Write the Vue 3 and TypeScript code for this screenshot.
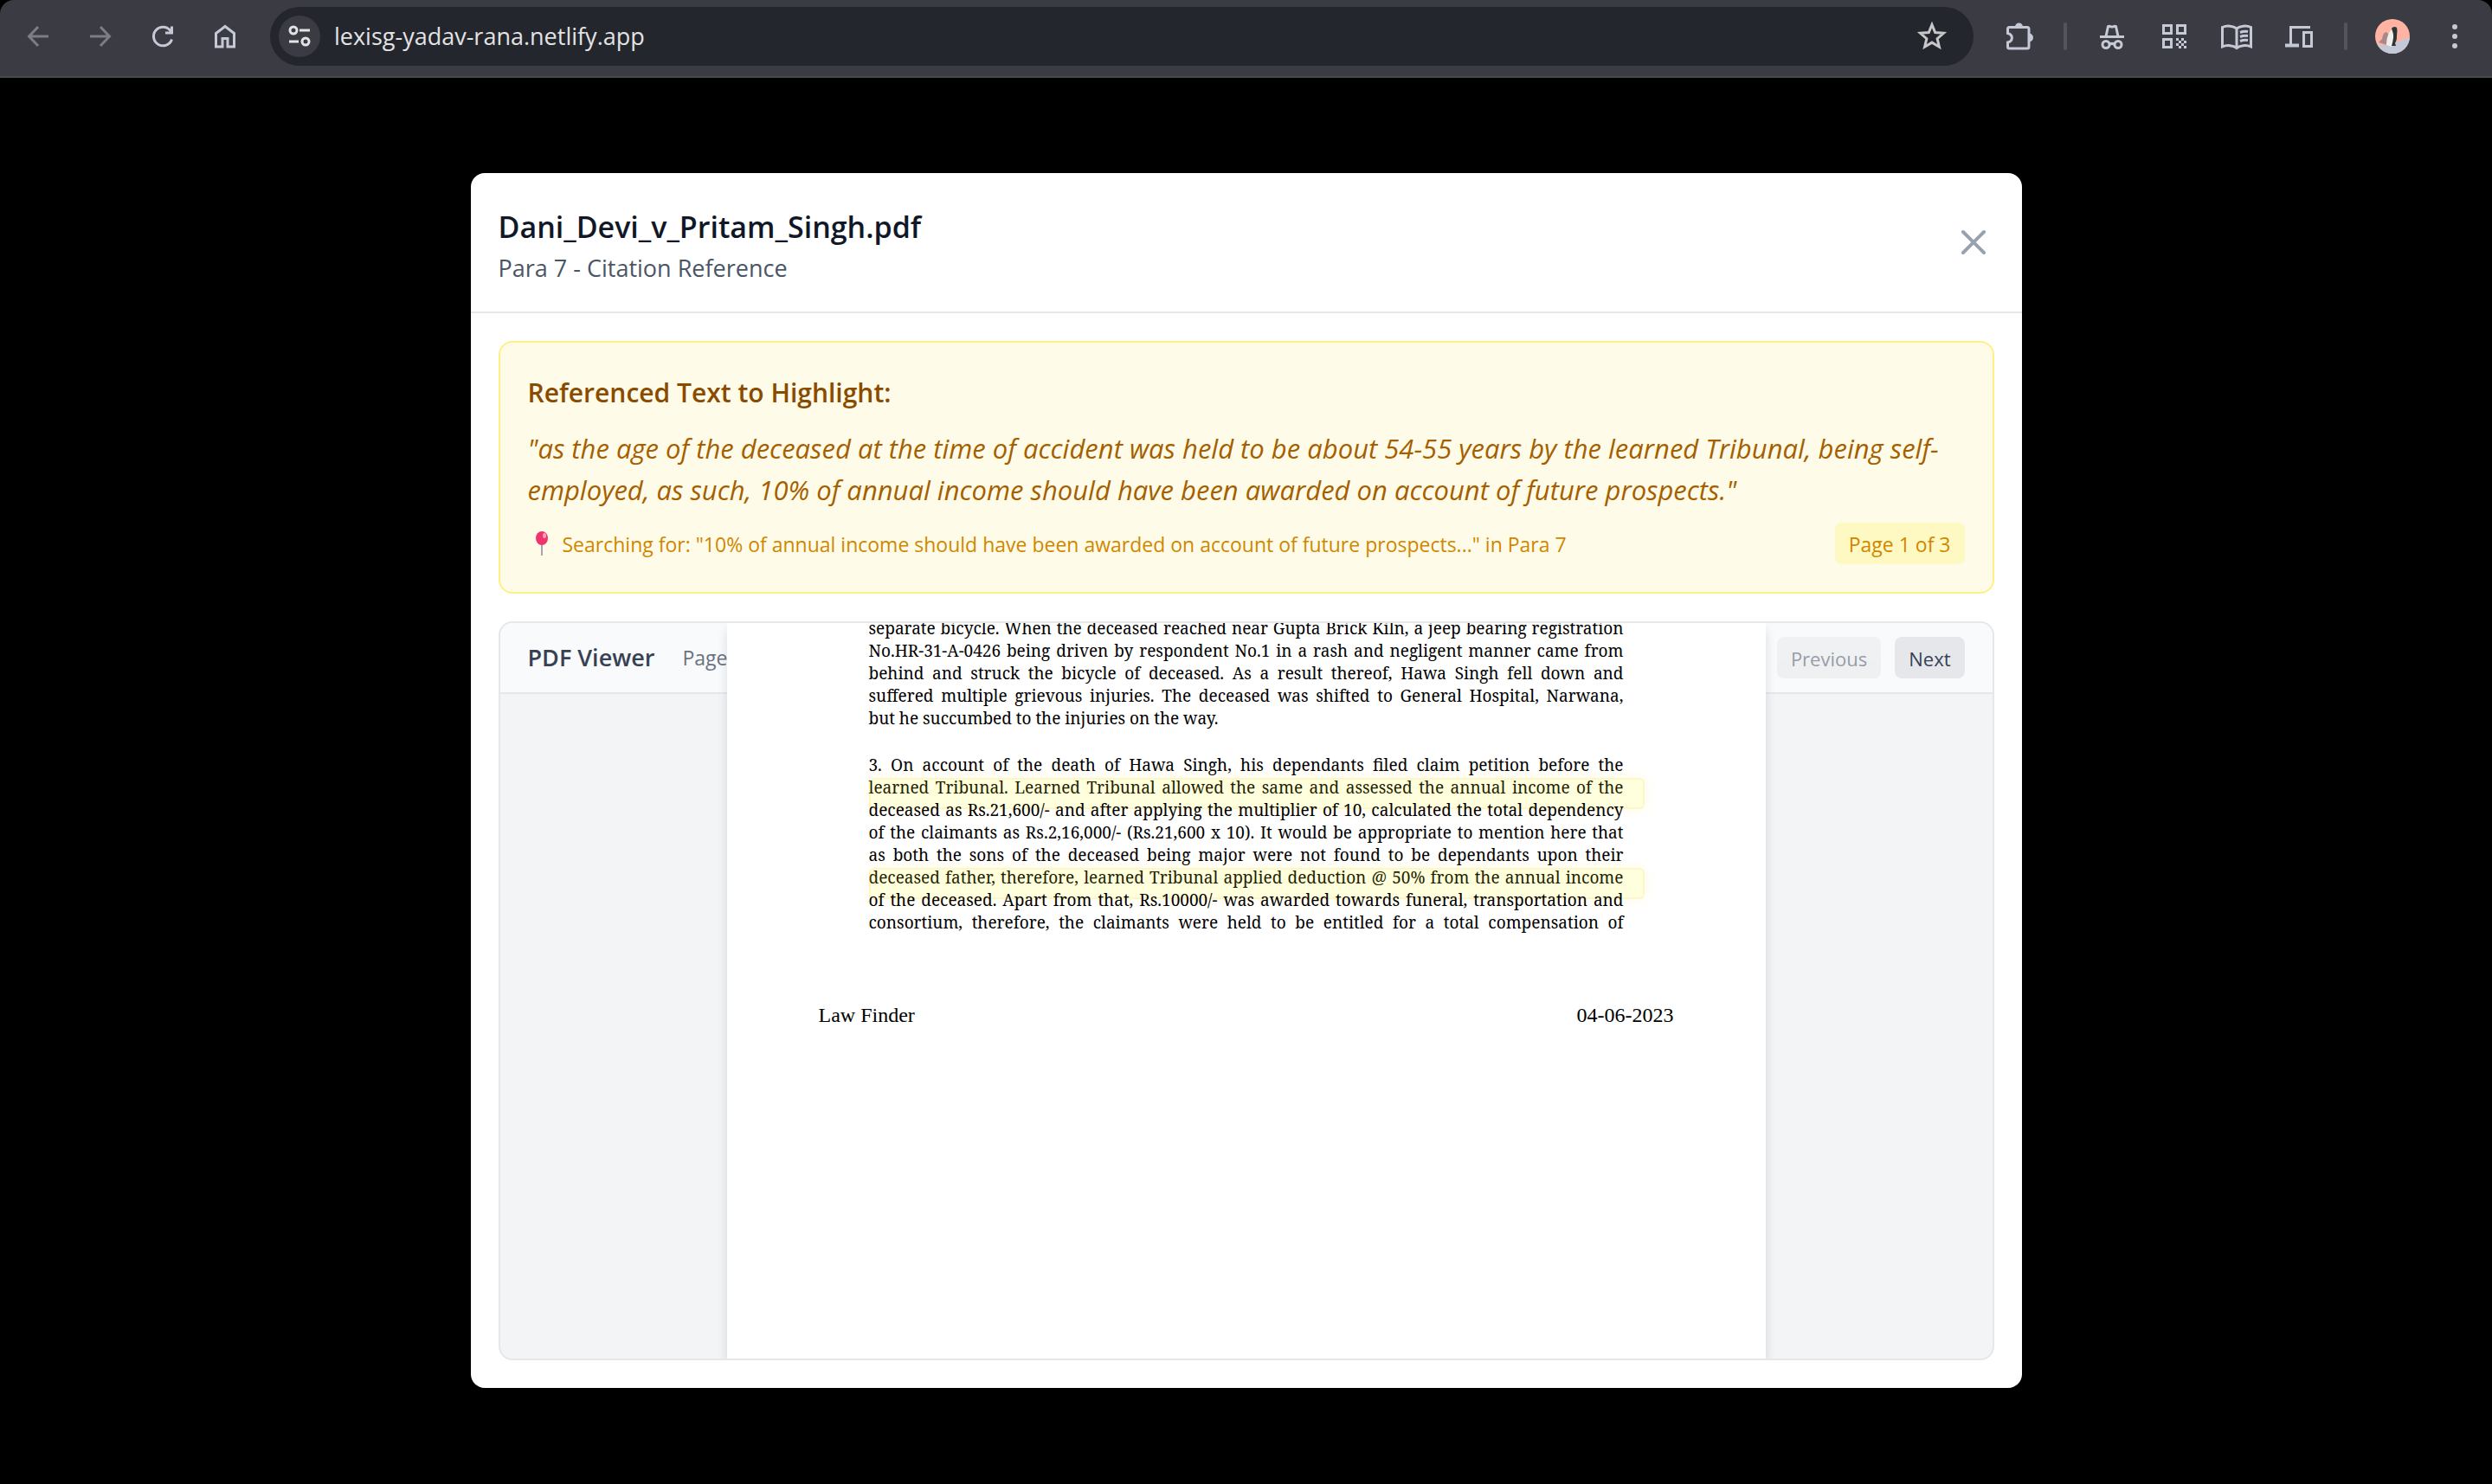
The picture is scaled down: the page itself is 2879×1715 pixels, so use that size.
<script setup lang="ts">
import { ref } from 'vue'

interface Line {
  text: string
  marked?: boolean
  last?: boolean
}

const address = ref('lexisg-yadav-rana.netlify.app')
const fileName = 'Dani_Devi_v_Pritam_Singh.pdf'
const page = ref(1)
const pageCount = 3

const paragraphs: Line[][] = [
  [
    { text: 'separate bicycle. When the deceased reached near Gupta Brick Kiln, a jeep bearing registration' },
    { text: 'No.HR-31-A-0426 being driven by respondent No.1 in a rash and negligent manner came from' },
    { text: 'behind and struck the bicycle of deceased. As a result thereof, Hawa Singh fell down and' },
    { text: 'suffered multiple grievous injuries. The deceased was shifted to General Hospital, Narwana,' },
    { text: 'but he succumbed to the injuries on the way.', last: true },
  ],
  [
    { text: '3. On account of the death of Hawa Singh, his dependants filed claim petition before the' },
    { text: 'learned Tribunal. Learned Tribunal allowed the same and assessed the annual income of the', marked: true },
    { text: 'deceased as Rs.21,600/- and after applying the multiplier of 10, calculated the total dependency' },
    { text: 'of the claimants as Rs.2,16,000/- (Rs.21,600 x 10). It would be appropriate to mention here that' },
    { text: 'as both the sons of the deceased being major were not found to be dependants upon their' },
    { text: 'deceased father, therefore, learned Tribunal applied deduction @ 50% from the annual income', marked: true },
    { text: 'of the deceased. Apart from that, Rs.10000/- was awarded towards funeral, transportation and' },
    { text: 'consortium, therefore, the claimants were held to be entitled for a total compensation of' },
  ],
]
</script>

<template>
  <div class="window">
    <header class="browser">
      <nav class="tools" aria-label="Navigation">
        <button class="tool dim" aria-label="Back">
          <svg width="32" height="32" viewBox="0 0 32 32"><path d="M28 16H6M16 5L5.500 16 16 27" /></svg>
        </button>
        <button class="tool dim" aria-label="Forward">
          <svg width="32" height="32" viewBox="0 0 32 32"><path d="M4 16h22M16 5l10.500 11L16 27" /></svg>
        </button>
        <button class="tool" aria-label="Reload">
          <svg width="32" height="32" viewBox="0 0 32 32"><path d="M26.500 19.500A10.800 10.800 0 1 1 24.500 9L27 12M26.500 4.500V12H19" /></svg>
        </button>
        <button class="tool" aria-label="Home">
          <svg width="32" height="32" viewBox="0 0 32 32"><path d="M5.500 28V12.500L16 4.500l10.500 8V28h-7.500v-9.500h-6V28z" /></svg>
        </button>
      </nav>
      <div class="address">
        <button class="site" aria-label="View site information">
          <svg width="28" height="28" viewBox="0 0 28 28"><circle cx="7" cy="7" r="4" /><path d="M14 7h12M2 20h11" /><circle cx="21" cy="20" r="4" /></svg>
        </button>
        <input v-model="address" type="text" aria-label="Address" />
        <button class="tool" aria-label="Bookmark">
          <svg class="star" width="36" height="36" viewBox="0 0 36 36"><path d="M18 4.500l3.700 9 9.800.8-7.400 6.400 2.300 9.500L18 25.100l-8.400 5.100 2.300-9.500-7.400-6.400 9.800-.8z" /></svg>
        </button>
      </div>
      <div class="tools">
        <button class="tool" aria-label="Extensions">
          <svg width="36" height="36" viewBox="0 0 36 36"><path d="M5.500 9.500a2 2 0 0 1 2-2H28a2 2 0 0 1 2 2V30a2 2 0 0 1-2 2H7.500a2 2 0 0 1-2-2v-5c6.500-1.500 6.500-9 0-10.500z" /><path class="fill" d="M14 7a4.500 4.500 0 0 1 9 0zM30 14.500a5 5 0 0 1 0 10z" /></svg>
        </button>
        <span class="divider"></span>
        <button class="tool" aria-label="Incognito">
          <svg width="32" height="32" viewBox="0 0 32 32"><path d="M2 16.500h28M9 16L11.500 4.500c2-1 2.500.5 4.500.5s2.500-1.500 4.500-.5L23 16M13 25.500c2-1.500 4-1.500 6 0" /><circle cx="9" cy="25.500" r="4" /><circle cx="23" cy="25.500" r="4" /></svg>
        </button>
        <button class="tool" aria-label="QR code">
          <svg width="32" height="32" viewBox="0 0 32 32"><path d="M3.500 3.500h9v9h-9zM19.500 3.500h9v9h-9zM3.500 19.500h9v9h-9z" /><path class="fill" d="M18 18h3v3h-3zM24 18h3v3h-3zM21 21h3v3h-3zM27 21h3v3h-3zM18 24h3v3h-3zM24 24h3v3h-3zM21 27h3v3h-3zM27 27h3v3h-3z" /></svg>
        </button>
        <button class="tool" aria-label="Reading mode">
          <svg width="40" height="32" viewBox="0 0 40 32"><path d="M20 7C16 4 9 3 3.500 5.500V28C9 25.500 16 26.500 20 29.500 24 26.500 31 25.500 36.500 28V5.500C31 3 24 4 20 7v22.500M24 11.500c3-1.200 6-1.500 9-1M24 16.500c3-1.200 6-1.500 9-1M24 21.500c3-1.200 6-1.500 9-1" /></svg>
        </button>
        <button class="tool" aria-label="Send to your devices">
          <svg width="36" height="32" viewBox="0 0 36 32"><path d="M31 5.500H8.500V26" /><path d="M2 26.500h16" stroke-width="4" /><path d="M23.500 11.500h9v16h-9z" /></svg>
        </button>
        <span class="divider"></span>
        <button class="tool" aria-label="Profile">
          <svg class="avatar" width="40" height="40" viewBox="0 0 40 40">
            <defs><clipPath id="face"><circle cx="20" cy="20" r="20" /></clipPath></defs>
            <g clip-path="url(#face)">
              <path fill="#ffb3a3" d="M0 0h40v40H0z" />
              <path fill="#c3c9d8" d="M0 29l14 2 26-10v19H0z" />
              <path fill="#a98a8c" d="M4 27l4-4c1-4 1-7 5-8l3 3-2 12z" />
              <path fill="#eef0ee" d="M13 30c0-7 2-14 6-18l3 4-3 16z" />
              <path fill="#2e3535" d="M19 11c1-2 4-3 6-1 1 3 0 7 0 11 0 3-1 5-2 7l1 3h-5c2-6 3-12 1-17z" />
            </g>
          </svg>
        </button>
        <button class="tool" aria-label="Menu">
          <svg width="8" height="32" viewBox="0 0 8 32"><g class="fill"><circle cx="4" cy="5" r="3" /><circle cx="4" cy="16" r="3" /><circle cx="4" cy="27" r="3" /></g></svg>
        </button>
      </div>
    </header>

    <main class="stage">
      <section class="modal" role="dialog" aria-labelledby="file-title">
        <header class="modal-head">
          <div>
            <h1 id="file-title">{{ fileName }}</h1>
            <p>Para 7 - Citation Reference</p>
          </div>
          <button class="close" aria-label="Close">
            <svg width="48" height="48" viewBox="0 0 24 24"><path d="M6 18L18 6M6 6l12 12" /></svg>
          </button>
        </header>

        <div class="modal-body">
          <section class="reference">
            <h2>Referenced Text to Highlight:</h2>
            <blockquote>"as the age of the deceased at the time of accident was held to be about 54-55 years by the learned Tribunal, being self-employed, as such, 10% of annual income should have been awarded on account of future prospects."</blockquote>
            <div class="search">
              <svg class="pin" width="32" height="32" viewBox="0 0 32 32">
                <path stroke="#a9a4b4" stroke-width="2" d="M16 16v14" />
                <ellipse cx="16" cy="10" rx="7" ry="8" fill="#f0346e" />
                <ellipse cx="19" cy="7" rx="2" ry="3" fill="#ffa3bd" />
              </svg>
              <span class="query">Searching for: "10% of annual income should have been awarded on account of future prospects..." in Para 7</span>
              <span class="badge">Page {{ page }} of {{ pageCount }}</span>
            </div>
          </section>

          <section class="viewer">
            <div class="viewer-bar">
              <h3>PDF Viewer</h3>
              <span class="count">Page</span>
              <button disabled>Previous</button>
              <button>Next</button>
            </div>
            <article class="sheet">
              <div class="copy">
                <div v-for="(lines, p) in paragraphs" :key="p" class="para">
                  <div v-for="(line, i) in lines" :key="i" class="line" :class="{ marked: line.marked, last: line.last }">{{ line.text }}</div>
                </div>
              </div>
              <footer>
                <span>Law Finder</span>
                <span>04-06-2023</span>
              </footer>
            </article>
          </section>
        </div>
      </section>
    </main>
  </div>
</template>

<style>
body {
  margin: 0;
  background: #000;
}
</style>

<style scoped>
* {
  box-sizing: border-box;
}
.window {
  display: flex;
  flex-direction: column;
  min-height: 100vh;
  background: #000;
  font-family: "Segoe UI", "Open Sans", "Noto Sans", sans-serif;
}
h1, h2, h3, p, blockquote {
  margin: 0;
}
button {
  border: 0;
  padding: 0;
  background: none;
  font: inherit;
  color: inherit;
}
svg {
  display: block;
  fill: none;
}

/* Browser toolbar */
.browser {
  display: flex;
  align-items: center;
  gap: 16px;
  height: 90px;
  padding: 0 7px 4px 8px;
  background: #3a3b43;
  border-bottom: 2px solid #48494c;
  border-radius: 16px 16px 0 0;
  color: #c5c8d5;
}
.tools {
  display: flex;
  align-items: center;
}
.tool {
  display: grid;
  place-items: center;
  width: 72px;
  height: 68px;
}
.tool svg {
  stroke: currentColor;
  stroke-width: 3;
}
.tool svg .fill {
  fill: currentColor;
  stroke: none;
}
.tool .avatar {
  stroke: none;
}
.dim {
  color: #7d7e83;
}
.divider {
  width: 4px;
  height: 32px;
  margin: 0 16px;
  border-radius: 2px;
  background: #53555e;
}
.address {
  display: flex;
  align-items: center;
  flex: 1;
  height: 68px;
  padding: 0 12px 0 10px;
  border-radius: 34px;
  background: #24262e;
  color: #e3e3e3;
}
.site {
  display: grid;
  place-items: center;
  width: 48px;
  height: 48px;
  border-radius: 24px;
  background: #3a3b43;
}
.site svg {
  stroke: currentColor;
  stroke-width: 3;
}
.address input {
  flex: 1;
  min-width: 0;
  padding: 0 16px;
  border: 0;
  outline: 0;
  background: none;
  color: inherit;
  font: inherit;
  font-size: 27px;
  line-height: 40px;
}
.star {
  color: #c7c7c7;
}

/* Dialog */
.stage {
  display: flex;
  flex: 1;
  justify-content: center;
  padding: 110px 32px 111px;
}
.modal {
  display: flex;
  flex-direction: column;
  width: 100%;
  max-width: 1792px;
  border-radius: 16px;
  background: #fff;
}
.modal-head {
  display: flex;
  align-items: center;
  justify-content: space-between;
  padding: 32px;
  border-bottom: 2px solid #e5e7eb;
}
h1 {
  font-size: 34px;
  font-weight: 600;
  line-height: 60px;
  color: #101828;
}
.modal-head p {
  font-size: 27px;
  line-height: 36px;
  color: #4a5565;
}
.close svg {
  stroke: #99a1af;
  stroke-width: 2;
  stroke-linecap: round;
}
.modal-body {
  display: flex;
  flex: 1;
  flex-direction: column;
  gap: 32px;
  padding: 32px;
}
.reference {
  display: flex;
  flex-direction: column;
  gap: 14px;
  padding: 32px;
  border: 2px solid #fff085;
  border-radius: 16px;
  background: #fefce8;
}
h2 {
  font-size: 30px;
  font-weight: 600;
  line-height: 52px;
  color: #894b00;
}
blockquote {
  font-size: 31px;
  font-style: italic;
  line-height: 48px;
  color: #a65f00;
}
.search {
  display: flex;
  align-items: center;
  gap: 8px;
  font-size: 23px;
  line-height: 32px;
  color: #d08700;
}
.query {
  flex: 1;
  padding: 9px 0 7px;
}
.badge {
  padding: 9px 16px 7px;
  border-radius: 8px;
  background: #fef9c2;
}

/* PDF viewer */
.viewer {
  display: grid;
  flex: 1;
  grid-template-rows: auto 1fr;
  overflow: hidden;
  border: 2px solid #e5e7eb;
  border-radius: 16px;
  background: #f3f4f6;
}
.viewer-bar {
  display: flex;
  grid-area: 1 / 1;
  align-items: center;
  gap: 16px;
  padding: 16px 32px;
  border-bottom: 2px solid #e5e7eb;
  background: #f9fafb;
  font-size: 23px;
  line-height: 32px;
  color: #364153;
}
h3 {
  margin-right: 16px;
  font-size: 27px;
  font-weight: 600;
}
.count {
  flex: 1;
  color: #6a7282;
}
.viewer-bar button {
  padding: 9px 16px 7px;
  border-radius: 8px;
  background: #e5e7eb;
  font-size: 22px;
}
.viewer-bar button:disabled {
  opacity: 0.5;
}
.sheet {
  z-index: 1;
  grid-area: 1 / 1 / 3 / 2;
  justify-self: center;
  width: 100%;
  max-width: 1200px;
  background: #fff;
  box-shadow: 0 8px 12px rgba(0, 0, 0, 0.12);
  font-family: "Noto Serif", "Droid Serif", "Liberation Serif", serif;
  color: #000;
}
.copy {
  display: flex;
  flex-direction: column;
  gap: 28px;
  margin-top: -7px;
  padding: 0 164px;
  font-size: 19px;
  line-height: 26px;
}
.line {
  position: relative;
  text-align-last: justify;
}
.last {
  text-align-last: left;
}
.marked::after {
  content: "";
  position: absolute;
  top: 2px;
  left: 0;
  right: -24px;
  height: 32px;
  border: 2px solid rgba(255, 200, 60, 0.16);
  border-radius: 6px;
  background: rgba(255, 255, 0, 0.13);
  box-shadow: 0 0 16px rgba(255, 220, 80, 0.16);
}
.sheet footer {
  display: flex;
  justify-content: space-between;
  margin-top: 80px;
  padding: 0 106px;
  font-family: "Liberation Serif", serif;
  font-size: 24px;
  line-height: 28px;
}
</style>
